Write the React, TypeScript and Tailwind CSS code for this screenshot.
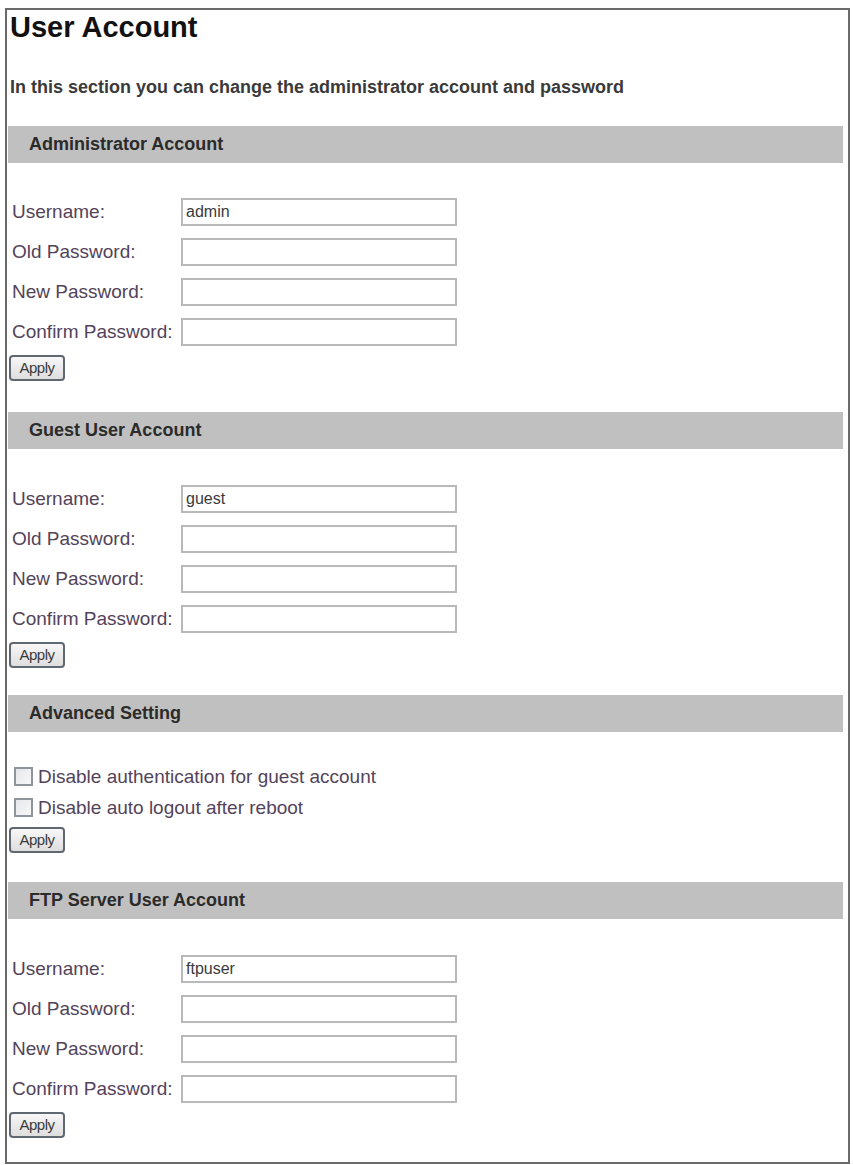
import React from "react";

const font = { fontFamily: '"Liberation Sans", Arial, sans-serif' };

function Header({ title, className }: { title: string; className: string }) {
  return (
    <div className={`ml-[1px] mr-[5px] flex h-[37px] items-center bg-[#c0c0c0] pl-[21px] text-[18px] font-bold text-[#2b2b2b] ${className}`}>
      {title}
    </div>
  );
}

function ApplyButton({ className }: { className: string }) {
  return (
    <button
      className={`ml-[2px] flex h-[26px] w-[56px] items-center justify-center rounded-[4px] border-2 border-[#5f6770] bg-gradient-to-b from-[#f7f7f7] to-[#dedede] text-[15px] tracking-[-0.5px] text-[#3a3a3a] ${className}`}
    >
      Apply
    </button>
  );
}

function AccountForm({ user, inputTop, applyTop }: { user: string; inputTop: string; applyTop: string }) {
  const rows = ["Username:", "Old Password:", "New Password:", "Confirm Password:"];
  return (
    <div className={inputTop}>
      <div className="flex flex-col gap-[12px]">
        {rows.map((label, i) => (
          <div key={label} className="flex h-[28px] items-center">
            <div className="w-[174px] pl-[5px] text-[19px] text-[#53435a]">{label}</div>
            <div className="flex h-[28px] w-[276px] items-center border-2 border-[#b9b9b9] bg-white pl-[3px] text-[16px] text-[#3a3a3a]">
              {i === 0 ? user : ""}
            </div>
          </div>
        ))}
      </div>
      <ApplyButton className={applyTop} />
    </div>
  );
}

function Check({ label }: { label: string }) {
  return (
    <div className="flex h-[19px] items-center">
      <span className="ml-[7px] h-[19px] w-[19px] border-2 border-[#8d949b] bg-gradient-to-br from-[#e4e7ea] to-[#f8f8f8]" />
      <span className="ml-[5px] text-[19px] leading-none text-[#53435a]">{label}</span>
    </div>
  );
}

export default function App() {
  return (
    <div style={font} className="h-[1165px] w-[853px] bg-white pl-[5px] pt-[8px]">
      <div className="h-[1156px] w-[845px] border-2 border-[#6a6a6a]">
        <h1 className="ml-[3px] mt-[3px] text-[29px] font-bold leading-none text-[#111]">User Account</h1>
        <p className="ml-[3px] mt-[36px] text-[18px] font-bold leading-none text-[#3a3a3a]">
          In this section you can change the administrator account and password
        </p>

        <Header title="Administrator Account" className="mt-[30px]" />
        <AccountForm user="admin" inputTop="mt-[35px]" applyTop="mt-[9px]" />

        <Header title="Guest User Account" className="mt-[31px]" />
        <AccountForm user="guest" inputTop="mt-[36px]" applyTop="mt-[9px]" />

        <Header title="Advanced Setting" className="mt-[27px]" />
        <div className="mt-[35px] flex flex-col gap-[12px]">
          <Check label="Disable authentication for guest account" />
          <Check label="Disable auto logout after reboot" />
        </div>
        <ApplyButton className="mt-[10px]" />

        <Header title="FTP Server User Account" className="mt-[29px]" />
        <AccountForm user="ftpuser" inputTop="mt-[36px]" applyTop="mt-[9px]" />
      </div>
    </div>
  );
}
